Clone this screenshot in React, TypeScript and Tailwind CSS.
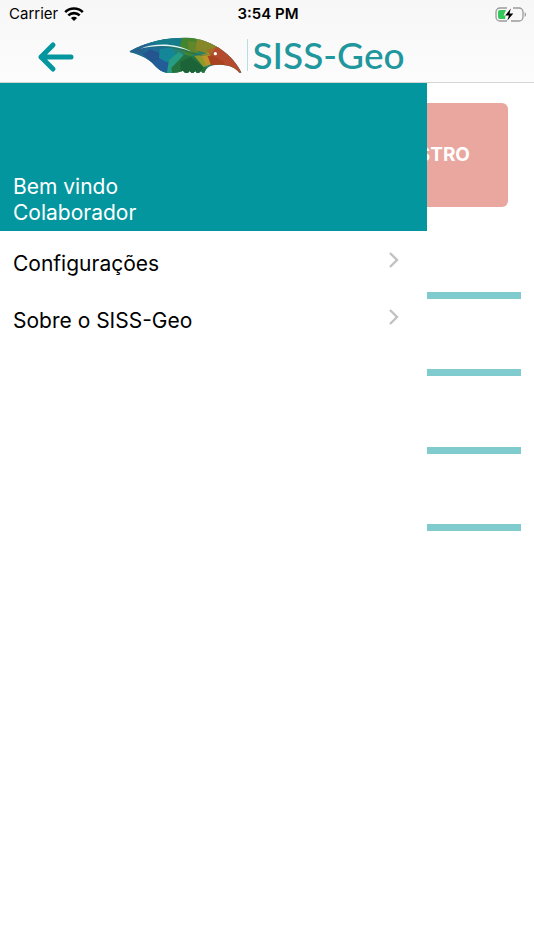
interface IMenuItem {
  label: string;
  href: string;
}

const menuItems: IMenuItem[] = [
  { label: "Configurações", href: "#configuracoes" },
  { label: "Sobre o SISS-Geo", href: "#sobre" },
];

const dividers = [1, 2, 3, 4];

const WifiIcon = () => (
  <svg width="20" height="14" viewBox="0 0 20 14" fill="none" stroke="#000" strokeWidth="2.6">
    <path d="M1.2 5.2C6 .3 14 .3 18.8 5.2" />
    <path d="M4.3 8.4c3.2-3.1 8.2-3.1 11.4 0" />
    <path d="M10 14 6.9 10.9c1.7-1.5 4.5-1.5 6.2 0Z" fill="#000" stroke="none" />
  </svg>
);

const BatteryIcon = () => (
  <svg width="32" height="15" viewBox="0 0 32 15">
    <path
      d="M12 1H5a4 4 0 0 0-4 4v5a4 4 0 0 0 4 4h7M18 1h6a4 4 0 0 1 4 4v5a4 4 0 0 1-4 4h-8"
      fill="none"
      stroke="#9a9a9a"
      strokeWidth="1.3"
    />
    <path d="M29.6 5.2c1.9.7 1.9 3.9 0 4.6Z" fill="#9a9a9a" />
    <path d="M5 3h6L8.6 8.6h1.7V12H5a2 2 0 0 1-2-2V5a2 2 0 0 1 2-2Z" fill="#34c759" />
    <path d="m15.8 1.4-5.6 7h3.7l-1.6 5.2 6-7h-3.8Z" fill="#000" />
  </svg>
);

const BirdLogo = () => (
  <svg width="114" height="38" viewBox="28 22 342 114">
    <defs>
      <clipPath id="bird">
        <path d="M30 68C80 38 145 26 200 27c45 1 80 17 110 39 26 19 43 40 56 66h-7c-12-15-30-23-58-24-27-1-41 7-47 24h-6l-4-5-6 5h-7l-4-5-6 5h-6l-5-5-5 5h-9l-6-6c-15 6-30 8-46 6C118 130 108 110 90 96 72 83 52 76 30 70Z" />
      </clipPath>
    </defs>
    <g clipPath="url(#bird)">
      <path d="M20 20h360v120H20Z" fill="#28806f" />
      <path d="M20 20h125v120H20Z" fill="#1f6d96" />
      <path d="M30 68 85 42l-15 34Z" fill="#27628f" />
      <path d="m68 76 22-14 30 10 7 30-22 6Z" fill="#24558f" />
      <path d="m98 98 32-10 18 16-4 36-30-6Z" fill="#235d98" />
      <path d="M85 42 150 26l55 4-25 24-50-4Z" fill="#157c8c" />
      <path d="m120 62 38-6 14 28-32 16-22-12Z" fill="#138797" />
      <path d="m148 94 30-24 15 12-18 26-18 32-16-4Z" fill="#259c83" />
      <path d="M188 24h50l-8 50-26 12-24-30Z" fill="#43852f" />
      <path d="m205 36 42 8-12 30-28-8Z" fill="#63852c" />
      <path d="M232 26c30 2 52 14 74 36l-30 16-48-14Z" fill="#858728" />
      <path d="m155 118 38-40 42 8 28 36-12 18h-92Z" fill="#24723d" />
      <path d="m182 100 30-14 40 30-16 24-52-4Z" fill="#1d6338" />
      <path d="m224 82 38-8 8 32-18 10Z" fill="#8f982b" />
      <path d="m246 80 28-10 8 34-22 8Z" fill="#bd9427" />
      <path d="m262 64 28-8 8 22-24 6Z" fill="#a86b27" />
      <path d="M290 52c30 12 60 46 80 90l-40-24-40-26-16-14Z" fill="#b54b2d" />
      <path d="m264 82 14-2 32 18 8 14-44-2Z" fill="#a9431f" />
      <path d="M62 61c42-19 105-18 151 7 25 12 47 11 67 5-24 12-48 11-70 1-44-20-98-23-148-13Z" fill="#14635d" opacity=".4" />
      <path d="M62 60c45-18 108-17 154 9-46-19-102-23-154-9Z" fill="#e5f6f4" />
    </g>
    <circle cx="287" cy="75" r="5" fill="#fff" />
  </svg>
);

const StatusBar = () => (
  <div className="grid h-7 grid-cols-3 items-center pl-[9px] pr-[7px] text-[15px] leading-5 text-black">
    <div className="flex items-center gap-[6px]">
      <span>Carrier</span>
      <WifiIcon />
    </div>
    <span className="text-center font-semibold">3:54 PM</span>
    <div className="flex justify-end">
      <BatteryIcon />
    </div>
  </div>
);

const Header = () => (
  <header className="border-b border-[#d5d5d5] bg-gradient-to-b from-[#f7f7f7] to-[#fcfcfc]">
    <StatusBar />
    <div className="relative flex h-[54px] items-center justify-center">
      <button type="button" aria-label="Voltar" className="absolute left-9 top-3">
        <svg width="40" height="34" viewBox="0 0 40 34" fill="none" stroke="#04969e" strokeWidth="5" strokeLinecap="round" strokeLinejoin="round">
          <path d="M35 17H5M17 5 5 17l12 12" />
        </svg>
      </button>
      <div className="flex items-center">
        <BirdLogo />
        <span className="ml-1 h-8 w-px bg-[#b5dfe0]" />
        <span className="ml-1 font-[Lato,sans-serif] text-[37px] font-medium leading-[54px] text-[#20969d]">
          SISS-Geo
        </span>
      </div>
    </div>
  </header>
);

const Drawer = () => (
  <aside className="absolute inset-y-0 left-0 w-4/5 bg-white">
    <div className="flex h-37 flex-col justify-end bg-[#04969e] px-[13px] pb-[5px] text-[21px] leading-[26px] text-white">
      <p>Bem vindo</p>
      <p>Colaborador</p>
    </div>
    <nav className="pt-1">
      {menuItems.map(({ label, href }) => (
        <a
          key={label}
          href={href}
          className="flex h-[57px] items-center justify-between pl-[13px] pr-7 text-[21px] leading-7 text-black"
        >
          {label}
          <svg className="mb-2" width="10" height="16" viewBox="0 0 10 16" fill="none" stroke="#c2c2c4" strokeWidth="2.4">
            <path d="m1 1 7 7-7 7" />
          </svg>
        </a>
      ))}
    </nav>
  </aside>
);

const Home = () => (
  <main className="pt-5">
    <div className="px-[26px]">
      <button
        type="button"
        className="flex h-26 w-full items-center justify-end rounded-md bg-[#eaa79f] pr-[38px] text-[19px] font-bold text-white"
      >
        REGISTRO
      </button>
    </div>
    <div className="mx-[13px] mt-[85px] flex h-[239px] flex-col justify-between">
      {dividers.map((item) => (
        <hr key={item} className="h-[7px] border-0 bg-[#80cbce]" />
      ))}
    </div>
  </main>
);

const App = () => {
  return (
    <div className="flex min-h-screen flex-col bg-white font-[Inter,sans-serif]">
      <Header />
      <div className="relative flex-1">
        <Home />
        <Drawer />
      </div>
    </div>
  );
};

export default App;
